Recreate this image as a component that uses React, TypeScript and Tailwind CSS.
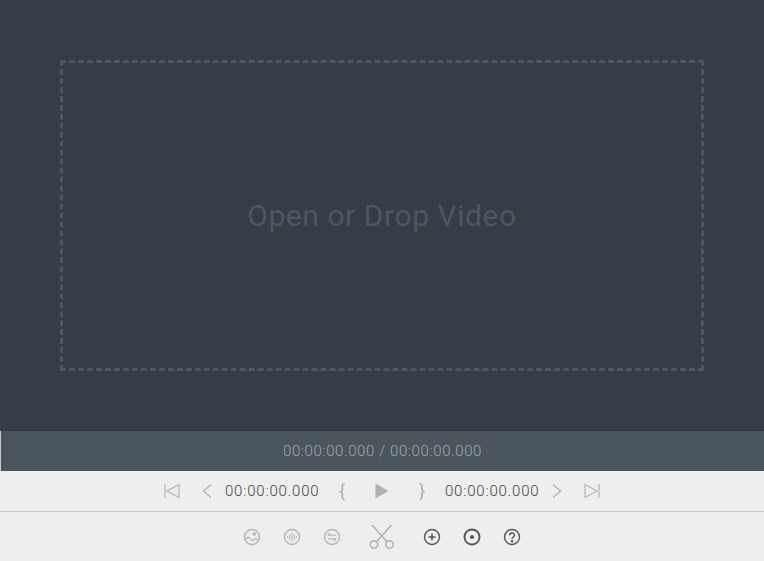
import React from 'react';

const font = "font-['Roboto','Liberation_Sans',sans-serif]";

function Scissors() {
  return (
    <svg width="26" height="26" viewBox="0 0 26 26" fill="none" stroke="#b5b5b5" strokeWidth="1.7">
      <circle cx="5" cy="20.5" r="3.7" />
      <circle cx="20.5" cy="20.5" r="3.7" />
      <path d="M7.5 17.8 L22.5 1 M18 17.8 L3 1" />
    </svg>
  );
}

function Circled({ color, children, sw = 1.4 }: { color: string; children: React.ReactNode; sw?: number }) {
  return (
    <svg width="18" height="18" viewBox="0 0 18 18" fill="none" stroke={color} strokeWidth={sw}>
      <circle cx="9" cy="9" r="7.5" />
      {children}
    </svg>
  );
}

function TimeText({ children }: { children: React.ReactNode }) {
  return <span className="w-[94px] whitespace-nowrap text-center text-[15px] font-light leading-none tracking-[0.8px] text-[#444]">{children}</span>;
}

export default function App() {
  return (
    <div className={`flex h-[561px] w-[764px] flex-col overflow-hidden bg-[#eeeeee] ${font}`}>
      {/* Drop area */}
      <div className="h-[431px] bg-[#353d47] p-[60px]">
        <div className="flex h-[311px] w-[644px] items-center justify-center border-[3px] border-dashed border-[#4c5761]">
          <span className="text-[30px] leading-none tracking-[0.56px] text-[#4c5761]">Open or Drop Video</span>
        </div>
      </div>

      {/* Position bar */}
      <div className="flex h-[40px] items-center justify-center border-l border-[#c8c8c8] bg-[#4b555d] text-[15px] font-light tracking-[0.6px] text-[#a0a6ab]">
        00:00:00.000 / 00:00:00.000
      </div>

      {/* Transport */}
      <div className="flex h-[41px] items-center justify-center border-b border-[#c6c6c6]">
        <svg width="16" height="16" viewBox="0 0 16 16" fill="none" stroke="#b5b5b5" strokeWidth="1.2" className="mr-[22px]">
          <path d="M1 1 V15 M15 1.5 V14.5 L3 8 Z" />
        </svg>
        <svg width="10" height="16" viewBox="0 0 10 16" fill="none" stroke="#b5b5b5" strokeWidth="1.4" className="mr-[13px]">
          <path d="M9 1.5 L1.5 8 L9 14.5" />
        </svg>
        <TimeText>00:00:00.000</TimeText>
        <span className="ml-[19px] mr-[29px] w-[8px] text-center text-[18px] leading-none text-[#b0b0b0]">{'{'}</span>
        <svg width="14" height="16" viewBox="0 0 14 16" fill="#b0b0b0" className="mr-[29px]">
          <path d="M0.5 0.5 L13.5 8 L0.5 15.5 Z" />
        </svg>
        <span className="mr-[19px] w-[8px] text-center text-[18px] leading-none text-[#b0b0b0]">{'}'}</span>
        <TimeText>00:00:00.000</TimeText>
        <svg width="10" height="16" viewBox="0 0 10 16" fill="none" stroke="#b5b5b5" strokeWidth="1.4" className="ml-[13px] mr-[22px]">
          <path d="M1 1.5 L8.5 8 L1 14.5" />
        </svg>
        <svg width="16" height="16" viewBox="0 0 16 16" fill="none" stroke="#b5b5b5" strokeWidth="1.2">
          <path d="M15 1 V15 M1 1.5 V14.5 L13 8 Z" />
        </svg>
      </div>

      {/* Tools */}
      <div className="flex h-[49px] items-center justify-center gap-[22px]">
        <Circled color="#b5b5b5">
          <circle cx="11.3" cy="6" r="1.7" fill="#b5b5b5" stroke="none" />
          <path d="M2 11.5 L5.5 9 L9.5 12.8 L12.5 10.5 L16 12.8" strokeWidth="1.2" />
        </Circled>
        <Circled color="#b5b5b5">
          <path d="M4.6 8 V10 M6.8 6.5 V11.5 M9 4.5 V13.5 M11.2 6.5 V11.5 M13.4 8 V10" strokeWidth="1" />
        </Circled>
        <Circled color="#b5b5b5">
          <path d="M4.8 7.2 H13.2 M4.8 7.2 L7.2 5 M4.8 10.8 H13.2 M13.2 10.8 L10.8 13" strokeWidth="1.3" />
        </Circled>
        <span className="mx-[6px] flex"><Scissors /></span>
        <Circled color="#555">
          <path d="M9 5.5 V12.5 M5.5 9 H12.5" />
        </Circled>
        <Circled color="#555" sw={1.9}>
          <circle cx="9" cy="9" r="2.1" fill="#555" stroke="none" />
        </Circled>
        <Circled color="#555">
          <path d="M6.6 7.2 C6.6 4.2 11.4 4.2 11.4 7.2 C11.4 9 9 9 9 11" />
          <circle cx="9" cy="13.2" r="0.6" fill="#555" />
        </Circled>
      </div>
    </div>
  );
}
